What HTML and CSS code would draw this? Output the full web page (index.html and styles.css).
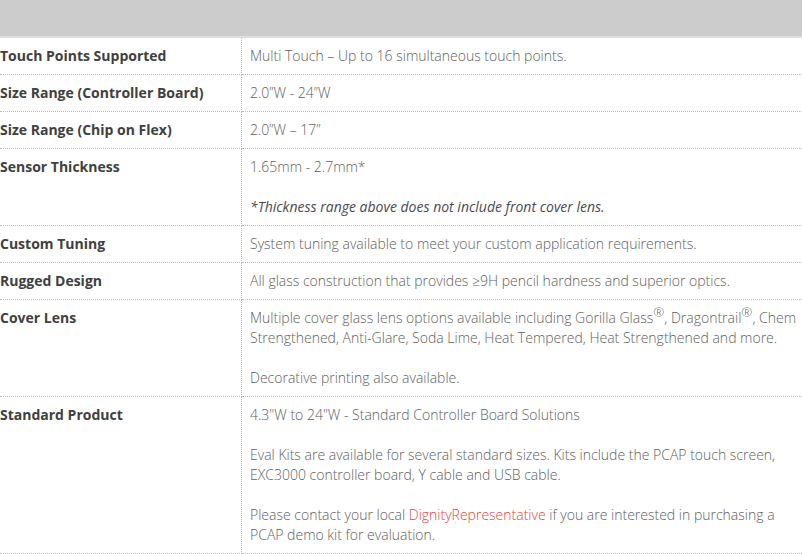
FILE: index.html
```html
<!DOCTYPE html>
<html lang="en">
<head>
<meta charset="utf-8">
<title>PCAP Specifications</title>
<link rel="stylesheet" href="styles.css">
</head>
<body>
<table class="spec">
  <colgroup><col class="c-label"><col class="c-value"></colgroup>
  <thead>
    <tr><th colspan="2" class="head"></th></tr>
  </thead>
  <tbody>
    <tr><td class="label">Touch Points Supported</td><td class="value"><p>Multi Touch – Up to 16 simultaneous touch points.</p></td></tr>
    <tr><td class="label">Size Range (Controller Board)</td><td class="value"><p>2.0”W - 24”W</p></td></tr>
    <tr><td class="label">Size Range (Chip on Flex)</td><td class="value"><p>2.0”W – 17”</p></td></tr>
    <tr><td class="label">Sensor Thickness</td><td class="value"><p>1.65mm - 2.7mm*</p><p class="note">*Thickness range above does not include front cover lens.</p></td></tr>
    <tr><td class="label">Custom Tuning</td><td class="value"><p>System tuning available to meet your custom application requirements.</p></td></tr>
    <tr><td class="label">Rugged Design</td><td class="value"><p>All glass construction that provides ≥9H pencil hardness and superior optics.</p></td></tr>
    <tr><td class="label">Cover Lens</td><td class="value"><p>Multiple cover glass lens options available including Gorilla Glass<sup>®</sup>, Dragontrail<sup>®</sup>, Chem Strengthened, Anti-Glare, Soda Lime, Heat Tempered, Heat Strengthened and more.</p><p>Decorative printing also available.</p></td></tr>
    <tr><td class="label">Standard Product</td><td class="value"><p>4.3"W to 24"W - Standard Controller Board Solutions</p><p>Eval Kits are available for several standard sizes. Kits include the PCAP touch screen, EXC3000 controller board, Y cable and USB cable.</p><p>Please contact your local <a class="rep" href="#">DignityRepresentative</a> if you are interested in purchasing a PCAP demo kit for evaluation.</p></td></tr>
  </tbody>
</table>
</body>
</html>
```

FILE: styles.css
```css
html, body {
  margin: 0;
  padding: 0;
  background: #fff;
}

body {
  font-family: "Open Sans", "Liberation Sans", sans-serif;
  font-size: 14px;
  line-height: 20px;
}

.spec {
  width: 100%;
  border-collapse: separate;
  border-spacing: 0;
  table-layout: fixed;
}

.c-label { width: 242px; }

.head {
  height: 36px;
  padding: 0;
  background: #cccccc;
  border-bottom: 2px solid #dedede;
}

.spec td {
  vertical-align: top;
  border-bottom: 1px dotted #bdbdbd;
  padding: 8px 0 8px 8px;
}

.spec td.label {
  padding-left: 0;
  border-right: 1px dotted #bdbdbd;
  font-weight: 700;
  color: #404040;
  white-space: nowrap;
}

.spec td.value {
  font-weight: 300;
  color: #5e5e5e;
}

.value p {
  margin: 0 0 20px 0;
}

.value p:last-child {
  margin-bottom: 0;
}

.value .note {
  font-style: italic;
  font-weight: 400;
  color: #4a4a55;
}

sup {
  font-size: 0.95em;
  line-height: 0;
  vertical-align: 0.45em;
}

.rep {
  color: #e8403a;
  text-decoration: none;
}
```
